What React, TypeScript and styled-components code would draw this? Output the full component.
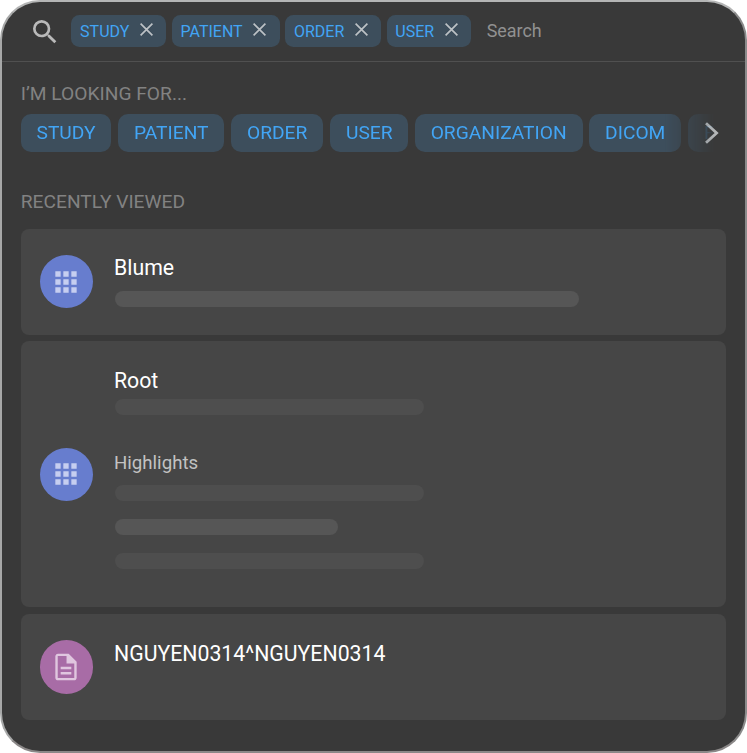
import React from 'react';
import styled, { createGlobalStyle } from 'styled-components';

const GlobalStyle = createGlobalStyle`
  * { box-sizing: border-box; }
  html, body { margin: 0; background: #fff; }
  body { font-family: Roboto, sans-serif; overflow: hidden; }
`;

const Panel = styled.main`
  width: 747px;
  height: 753px;
  background: #393939;
  border: 2px solid;
  border-color: #b4b5b5 #8b8b8b #8b8888 #a7a8a8;
  border-radius: 40px;
  overflow: hidden;
`;

const SearchBar = styled.header`
  display: flex;
  align-items: flex-start;
  height: 60px;
  padding: 13px 0 0 26.7px;
  border-bottom: 1px solid #505050;
`;

const SearchIcon = styled.svg`
  width: 32px;
  height: 32px;
  margin: 1px 10.6px 0 0;
  fill: #bababa;
`;

const Tags = styled.div`
  display: flex;
  gap: 5.6px;
`;

const Tag = styled.span<{ $width: number }>`
  display: flex;
  justify-content: space-between;
  width: ${(p) => p.$width}px;
  height: 31.5px;
  padding: 0 13.2px 0 8.8px;
  border-radius: 8.5px;
  background: #3d4e5c;
  color: #42a5f5;
  font-size: 16px;
  line-height: 33px;
  white-space: nowrap;
`;

const CloseIcon = styled.svg`
  width: 13px;
  height: 13px;
  margin-top: 8px;
  flex: none;
  stroke: #bcc1c5;
  stroke-width: 1.7;
  fill: none;
`;

const SearchInput = styled.input`
  width: 200px;
  height: 32px;
  margin-left: 15.8px;
  padding: 0;
  border: 0;
  outline: 0;
  background: transparent;
  color: #919191;
  font: 17.9px/32px Roboto, sans-serif;
  &::placeholder { color: #919191; opacity: 1; }
`;

const Content = styled.div`
  padding: 0 18.8px;
`;

const SectionTitle = styled.h2<{ $top: number }>`
  margin: ${(p) => p.$top}px 0 0;
  color: #828282;
  font-size: 19.2px;
  font-weight: 400;
  line-height: 24px;
`;

const Suggestions = styled.div`
  display: flex;
  align-items: center;
  width: 700px;
  margin-top: 8px;
`;

const SuggestionList = styled.div`
  flex: none;
  display: flex;
  gap: 6.8px;
  width: 704px;
  margin-right: -20.5px;
  overflow: hidden;
  mask-image: linear-gradient(to right, #000 644px, transparent 694px);
`;

const Suggestion = styled.button<{ $width: number }>`
  flex: none;
  width: ${(p) => p.$width}px;
  height: 37.6px;
  padding: 0 0 0 15.7px;
  border: 0;
  border-radius: 10px;
  background: #3d4e5c;
  color: #42a5f5;
  font: 19.2px/38px Roboto, sans-serif;
  text-align: left;
`;

const NextIcon = styled.svg`
  flex: none;
  width: 16px;
  height: 24px;
  stroke: #b5b7b8;
  stroke-width: 2.8;
  fill: none;
`;

const Results = styled.div`
  display: flex;
  flex-direction: column;
  gap: 6.6px;
  width: 704.9px;
  margin-top: 15px;
`;

const Card = styled.article<{ $height: number }>`
  display: flex;
  align-items: center;
  height: ${(p) => p.$height}px;
  padding-left: 19px;
  border-radius: 8px;
  background: #464646;
`;

const Avatar = styled.div<{ $color: string }>`
  display: grid;
  place-items: center;
  flex: none;
  width: 53.3px;
  height: 53.3px;
  border-radius: 50%;
  background: ${(p) => p.$color};
`;

const AvatarIcon = styled.svg<{ $color: string }>`
  width: 32px;
  height: 32px;
  fill: ${(p) => p.$color};
`;

const Details = styled.div`
  align-self: stretch;
  margin-left: 20.9px;
  padding-top: 25.7px;
`;

const Title = styled.h3`
  margin: 0;
  color: #fff;
  font-size: 21.27px;
  font-weight: 400;
  line-height: 28px;
`;

const Subtitle = styled.h4`
  margin: 36px 0 0;
  color: #c2c2c2;
  font-size: 18.67px;
  font-weight: 400;
  line-height: 24px;
`;

const Placeholder = styled.div<{ $width: number; $top: number; $strong?: boolean }>`
  width: ${(p) => p.$width}px;
  height: 16px;
  margin: ${(p) => p.$top}px 0 0 0.7px;
  border-radius: 8px;
  background: ${(p) => (p.$strong ? '#565656' : '#4e4e4e')};
`;

const tags = [
  { label: 'STUDY', width: 94.8 },
  { label: 'PATIENT', width: 107.9 },
  { label: 'ORDER', width: 95.8 },
  { label: 'USER', width: 84.3 },
];

const suggestions = [
  { label: 'STUDY', width: 90.7 },
  { label: 'PATIENT', width: 106.2 },
  { label: 'ORDER', width: 92.2 },
  { label: 'USER', width: 77.9 },
  { label: 'ORGANIZATION', width: 167.7 },
  { label: 'DICOM', width: 92 },
  { label: 'F', width: 36 },
];

const AppsAvatar = () => (
  <Avatar $color="#677dce">
    <AvatarIcon $color="#c6cef0" viewBox="0 0 24 24">
      <path d="M4 8h4V4H4v4zm6 12h4v-4h-4v4zm-6 0h4v-4H4v4zm0-6h4v-4H4v4zm6 0h4v-4h-4v4zm6-10v4h4V4h-4zm-6 4h4V4h-4v4zm6 6h4v-4h-4v4zm0 6h4v-4h-4v4z" />
    </AvatarIcon>
  </Avatar>
);

export default function App() {
  return (
    <>
      <GlobalStyle />
      <Panel>
        <SearchBar>
          <SearchIcon viewBox="0 0 24 24">
            <path d="M15.5 14h-.79l-.28-.27A6.47 6.47 0 0 0 16 9.5 6.5 6.5 0 1 0 9.5 16c1.61 0 3.09-.59 4.23-1.57l.27.28v.79l5 4.99L20.49 19l-4.99-5zm-6 0a4.5 4.5 0 1 1 0-9 4.5 4.5 0 0 1 0 9z" />
          </SearchIcon>
          <Tags>
            {tags.map((t) => (
              <Tag key={t.label} $width={t.width}>
                {t.label}
                <CloseIcon viewBox="0 0 13 13">
                  <path d="M.6.6l11.8 11.8M12.4.6L.6 12.4" />
                </CloseIcon>
              </Tag>
            ))}
          </Tags>
          <SearchInput placeholder="Search" />
        </SearchBar>
        <Content>
          <SectionTitle $top={20}>I’M LOOKING FOR...</SectionTitle>
          <Suggestions>
            <SuggestionList>
              {suggestions.map((s) => (
                <Suggestion key={s.label} $width={s.width}>{s.label}</Suggestion>
              ))}
            </SuggestionList>
            <NextIcon viewBox="0 0 16 24">
              <path d="M2 2.2L12.6 12 2 21.8" />
            </NextIcon>
          </Suggestions>
          <SectionTitle $top={38}>RECENTLY VIEWED</SectionTitle>
          <Results>
            <Card $height={106.3}>
              <AppsAvatar />
              <Details>
                <Title>Blume</Title>
                <Placeholder $width={464} $top={8.9} $strong />
              </Details>
            </Card>
            <Card $height={265.8}>
              <AppsAvatar />
              <Details>
                <Title>Root</Title>
                <Placeholder $width={309.5} $top={4.1} />
                <Subtitle>Highlights</Subtitle>
                <Placeholder $width={309.5} $top={9.8} />
                <Placeholder $width={223.7} $top={18.1} $strong />
                <Placeholder $width={309.5} $top={18.1} />
              </Details>
            </Card>
            <Card $height={106.3}>
              <Avatar $color="#a86ca6">
                <AvatarIcon $color="#e0c6df" viewBox="0 0 24 24">
                  <path d="M8 15.8h8v1.9H8zm0-4h8v1.9H8zM14 2H6c-1.1 0-2 .9-2 2v16c0 1.1.89 2 1.99 2H18c1.1 0 2-.9 2-2V8l-6-6zm4.2 18.2H5.8V3.800h6.600V9.300h5.800v10.900z" />
                </AvatarIcon>
              </Avatar>
              <Details>
                <Title>NGUYEN0314^NGUYEN0314</Title>
              </Details>
            </Card>
          </Results>
        </Content>
      </Panel>
    </>
  );
}
